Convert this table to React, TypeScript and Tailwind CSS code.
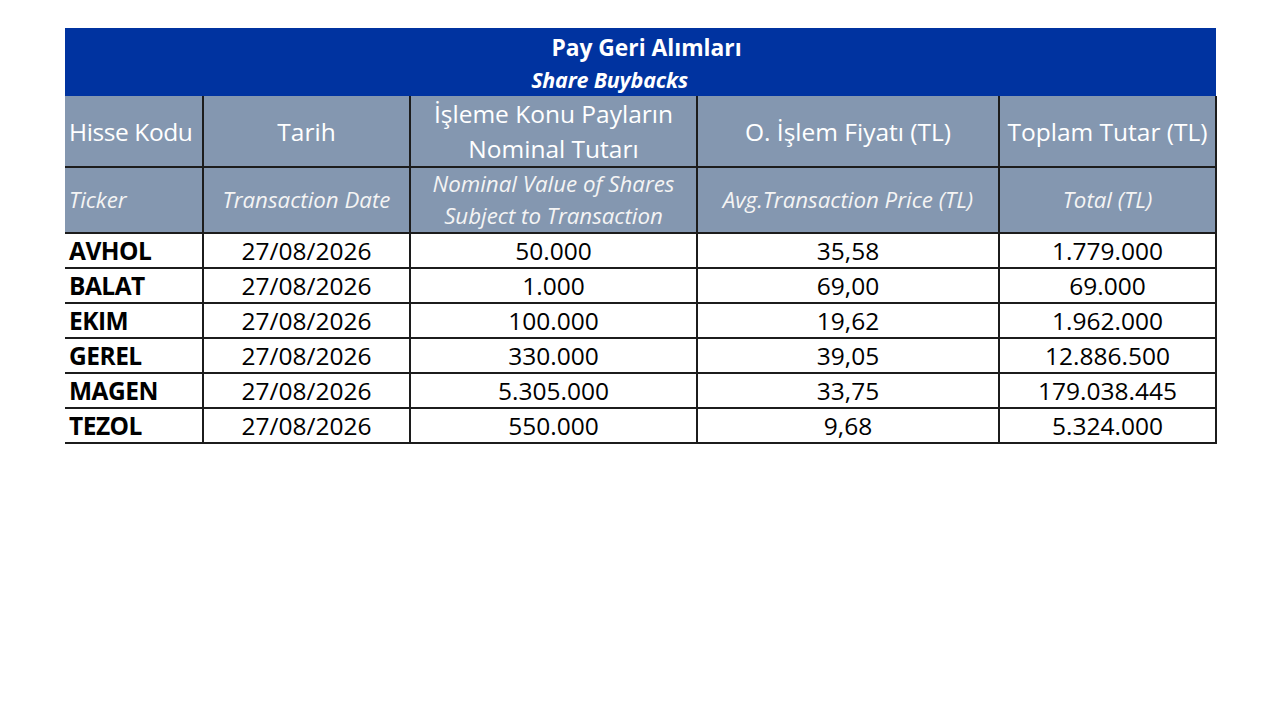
const ROWS = [
  { ticker: "AVHOL", date: "27/08/2026", nominal: "50.000", price: "35,58", total: "1.779.000" },
  { ticker: "BALAT", date: "27/08/2026", nominal: "1.000", price: "69,00", total: "69.000" },
  { ticker: "EKIM", date: "27/08/2026", nominal: "100.000", price: "19,62", total: "1.962.000" },
  { ticker: "GEREL", date: "27/08/2026", nominal: "330.000", price: "39,05", total: "12.886.500" },
  { ticker: "MAGEN", date: "27/08/2026", nominal: "5.305.000", price: "33,75", total: "179.038.445" },
  { ticker: "TEZOL", date: "27/08/2026", nominal: "550.000", price: "9,68", total: "5.324.000" },
];

export default function App() {
  return (
    <div className="w-[1280px] h-[720px] bg-white pt-[28px] pl-[65px] font-['Open_Sans',_'Lato',_sans-serif]">
      <table className="w-[1151px] table-fixed border-collapse">
        <colgroup>
          <col className="w-[138px]" />
          <col className="w-[207px]" />
          <col className="w-[287px]" />
          <col className="w-[302px]" />
          <col className="w-[217px]" />
        </colgroup>
        <thead>
          <tr>
            <th colSpan={5} className="h-[68px] bg-[#0033a0] text-white text-center align-middle p-0 pt-[1px]">
              <div className="pl-[12px] text-[22.8px] font-bold leading-[33px]">Pay Geri Alımları</div>
              <div className="pr-[62px] text-[21.5px] font-bold italic leading-[31px] tracking-[-0.2px]">Share Buybacks</div>
            </th>
          </tr>
          <tr className="bg-[#8497b0] text-white text-[24.5px] leading-[35px]">
            <th className="h-[70px] border-r-2 border-b-2 border-[#1c1c1c] text-left pl-[4px] font-normal whitespace-nowrap tracking-[-0.4px]">Hisse Kodu</th>
            <th className="border-x-2 border-b-2 border-[#1c1c1c] text-center font-normal">Tarih</th>
            <th className="border-x-2 border-b-2 border-[#1c1c1c] text-center font-normal">
              İşleme Konu Payların
              <br />
              Nominal Tutarı
            </th>
            <th className="border-x-2 border-b-2 border-[#1c1c1c] text-center font-normal whitespace-nowrap">O. İşlem Fiyatı (TL)</th>
            <th className="border-x-2 border-b-2 border-[#1c1c1c] text-center font-normal whitespace-nowrap">Toplam Tutar (TL)</th>
          </tr>
          <tr className="bg-[#8497b0] text-[#f4f4f4] text-[22.3px] italic leading-[32px]">
            <th className="h-[66px] border-r-2 border-b-2 border-[#1c1c1c] text-left pl-[4px] font-normal">Ticker</th>
            <th className="border-x-2 border-b-2 border-[#1c1c1c] text-center font-normal whitespace-nowrap">Transaction Date</th>
            <th className="border-x-2 border-b-2 border-[#1c1c1c] text-center font-normal whitespace-nowrap">
              Nominal Value of Shares
              <br />
              Subject to Transaction
            </th>
            <th className="border-x-2 border-b-2 border-[#1c1c1c] text-center font-normal whitespace-nowrap">Avg.Transaction Price (TL)</th>
            <th className="border-x-2 border-b-2 border-[#1c1c1c] text-center font-normal">Total (TL)</th>
          </tr>
        </thead>
        <tbody className="text-[24.5px] text-black leading-[31px]">
          {ROWS.map((r) => (
            <tr key={r.ticker} className="h-[35px]">
              <td className="border-r-2 border-b-2 border-[#1c1c1c] pl-[4px] font-bold tracking-[-0.5px]">{r.ticker}</td>
              <td className="border-x-2 border-b-2 border-[#1c1c1c] text-center">{r.date}</td>
              <td className="border-x-2 border-b-2 border-[#1c1c1c] text-center">{r.nominal}</td>
              <td className="border-x-2 border-b-2 border-[#1c1c1c] text-center">{r.price}</td>
              <td className="border-x-2 border-b-2 border-[#1c1c1c] text-center">{r.total}</td>
            </tr>
          ))}
        </tbody>
      </table>
    </div>
  );
}
